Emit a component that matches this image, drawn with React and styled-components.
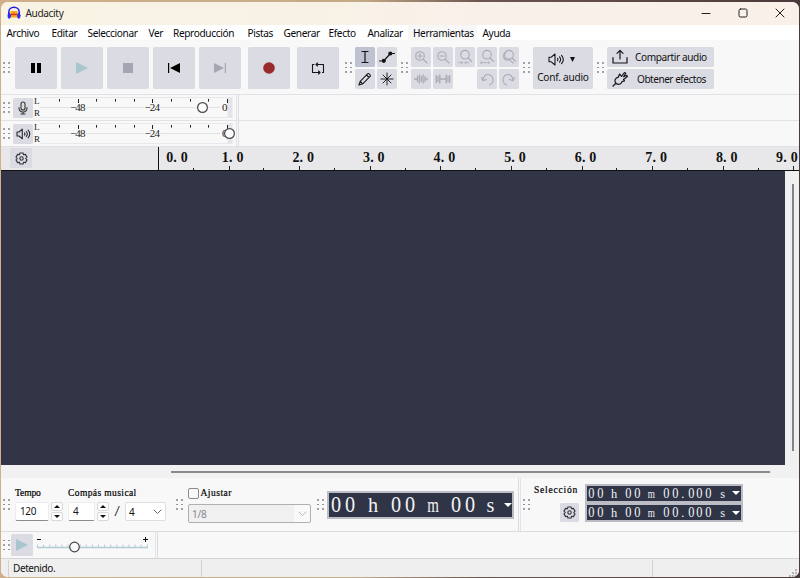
import React from 'react';
import styled, { createGlobalStyle } from 'styled-components';

const Global = createGlobalStyle`
  * { box-sizing: border-box; }
  html, body { margin: 0; padding: 0; overflow: hidden; }
  body { background: #7a6455; font-family: "Noto Sans", "Open Sans", sans-serif; }
  svg { display: block; flex: none; }
`;
const Desktop = styled.div`
  width: 800px; height: 578px; padding: 2px 1px 1px 1px;
  background: linear-gradient(90deg, #cfb08a 0, #c3aa86 45%, #6d5550 60%, #4b3a3b 100%);
`;
const Window = styled.div`
  height: 575px; border-radius: 7px; overflow: hidden; background: #f8f8f8;
  display: flex; flex-direction: column; color: #111;
`;
const TitleBar = styled.header`
  height: 23px; flex: none; display: flex; align-items: center; padding: 0 14px 2px 6px;
  background: linear-gradient(90deg, #f8f3e3, #f8f2e6 40%, #faf0ea 60%, #f9f0ea);
`;
const Title = styled.span`
  font-size: 10.1px; letter-spacing: -0.36px; margin-left: 4.5px; flex: 1; color: #222;
`;
const WindowButtons = styled.div`display: flex; align-items: center; gap: 27px;`;
const MenuBar = styled.nav`
  height: 15px; flex: none; display: flex; background: #fff;
`;
const MenuItem = styled.span`
  width: ${p => p.$w}px; flex: none; padding-left: 5.5px; font-size: 10.1px; line-height: 17px;
  letter-spacing: -0.36px; white-space: nowrap; color: #08080c;
  background: ${p => (p.$hover ? '#f7f7f7' : 'transparent')};
`;
const ToolRow = styled.div`
  height: 55px; flex: none; display: flex; align-items: flex-start; padding-top: 7px;
  border-bottom: 1px solid #e2e2e6; background: #f8f8f9;
`;
const GripBox = styled.div`
  width: 7px; height: 11px; flex: none; display: grid; grid-template-columns: 2px 2px; gap: 2.6px 3px;
  margin: ${p => p.$m};
`;
const Dot = styled.i`width: 1.7px; height: 1.7px; background: #85858f; border-radius: 1px;`;
const Button = styled.div`
  width: ${p => p.$w || 42}px; height: ${p => p.$h || 42}px; flex: none; border-radius: 1.5px;
  margin-left: ${p => p.$ml || 0}px; background: ${p => (p.$on ? '#bfc2d0' : '#dbdce3')};
  display: flex; align-items: center; justify-content: center;
`;
const Transport = styled.div`display: flex; gap: 4px;`;
const ToolGrid = styled.div`
  display: grid; grid-template-columns: repeat(${p => p.$n}, 20px); gap: 2px;
`;
const AudioSetup = styled(Button)`
  flex-direction: column; width: 60px; gap: 2px; font-size: 10.1px; letter-spacing: -0.24px; line-height: 18px; white-space: nowrap;
`;
const IconLine = styled.div`display: flex; align-items: center; gap: 5px; padding: 2px 3px 0 0;`;
const ShareStack = styled.div`display: flex; flex-direction: column; gap: 2px;`;
const ShareButton = styled(Button)`
  width: 107px; height: 20px; justify-content: flex-start; padding-left: 5px; font-size: 10.1px;
  white-space: nowrap; letter-spacing: ${p => p.$ls}px; gap: ${p => p.$gap}px;
`;
const MeterRow = styled.div`
  height: 26px; flex: none; display: flex; align-items: center; border-bottom: 1px solid #e2e2e6;
`;
const MeterBar = styled.div`
  width: 238px; height: 25px; display: flex; align-items: center;
  border-right: 1px solid #dcdce2; background: linear-gradient(#e2e2e6, #e2e2e6) 235px 0 / 1px 25px no-repeat;
`;
const Channels = styled.div`
  width: 6px; margin-left: 1px; display: flex; flex-direction: column; gap: 3px;
  font: 9px/9px "Liberation Serif", serif; color: #222;
`;
const Ruler = styled.div`
  height: 24px; flex: none; display: flex; background: #e8e8ea; border-bottom: 1px solid #111; overflow: hidden;
`;
const RulerHead = styled.div`width: 157px; flex: none; padding: 1px 0 0 9px; display: flex;`;
const RulerCell = styled.div`
  width: ${p => p.$w}px; flex: none; height: 23px; display: flex; justify-content: ${p => (p.$first ? 'flex-start' : 'center')};
  padding-left: ${p => p.$pl}px; padding-right: ${p => p.$pr || 0}px;
  border-left: ${p => (p.$first ? '1px solid #111' : '0')};
  background: linear-gradient(#222, #222) ${p => (p.$first ? '-5px' : '50%')} 100% / 1px 4px no-repeat,
    linear-gradient(#222, #222) 100% 100% / 1px 2px no-repeat;
`;
const Glyph = styled.span`
  width: ${p => p.$w}px; flex: none; text-align: ${p => p.$align || 'center'};
  display: inline-block; white-space: pre; transform: scale(${p => p.$sx || 1}, ${p => p.$sy || 1});
`;
const RulerLabel = styled.div`
  display: flex; flex: none; font: bold 14px/21px "Liberation Serif", serif; color: #111;
`;
const Tracks = styled.div`height: 294px; flex: none; display: flex; background: #f0f0f1;`;
const TrackArea = styled.div`width: 784px; background: #323546;`;
const VThumb = styled.div`width: 1.5px; height: 267px; margin: 13px 0 0 7px; background: #858589;`;
const HScroll = styled.div`
  height: 13px; flex: none; background: #f1f1f2; padding: 6px 0 0 170px;
`;
const HThumb = styled.div`width: 599px; height: 2px; background: #8a8a8d;`;
const BottomRow = styled.div`
  height: 54px; flex: none; display: flex; align-items: flex-start; background: #f8f8f9; border-bottom: 1px solid #dcdce0;
`;
const Group = styled.div`
  display: flex; flex-direction: column; flex: none; width: ${p => p.$w}px; padding-top: ${p => p.$pt || 0}px;
`;
const PixelLabel = styled.div`
  font: 9.5px/12px "Liberation Serif", serif; letter-spacing: ${p => p.$ls}px; height: 12px;
  white-space: pre; color: #000; -webkit-text-stroke: 0.2px #000; width: ${p => p.$w || 'auto'};
`;
const Line = styled.div`display: flex; align-items: center; margin-top: ${p => p.$mt || 0}px;`;
const Field = styled.div`
  width: ${p => p.$w}px; height: 19px; margin-left: ${p => p.$ml || 0}px; background: #fff;
  border: 1px solid #ececef; border-bottom-color: #8c8c90;
  font-size: 10px; letter-spacing: -0.4px; line-height: 17px; padding-left: 4px; color: #16161c; border-radius: 2px;
`;
const Spin = styled.div`width: 12px; margin-left: 2px; display: flex; flex-direction: column; gap: 1px;`;
const SpinKey = styled.div`
  height: 9px; background: #fefefe; border: 1px solid #d9d9dc; border-radius: 2px;
  display: flex; align-items: center; justify-content: center;
`;
const Slash = styled.div`
  width: 16px; text-align: center; font: 15px/19px "Liberation Serif", serif; transform: scaleX(1.25);
`;
const Select = styled.div`
  width: ${p => p.$w}px; height: ${p => p.$h}px; display: flex; align-items: center; justify-content: space-between;
  padding: 0 3px; border: 1px solid ${p => (p.$dim ? '#b0b0b4' : '#dedee2')}; border-radius: 2px;
  background: ${p => (p.$dim ? 'linear-gradient(90deg,#f0f0f1 105px,#f9f9f9 105px)' : '#fff')};
  font-size: 10px; letter-spacing: -0.2px; color: ${p => (p.$dim ? '#85858a' : '#111')};
`;
const Check = styled.div`
  width: 11px; height: 11px; border: 1px solid #8a8a8e; border-radius: 2px; background: #f8f8f8; margin-right: 1.5px;
`;
const TimeBox = styled.div`
  width: ${p => p.$w}px; height: ${p => p.$h}px; flex: none; border: 2px solid #bcbdc4; background: #303447;
  display: flex; align-items: center; color: #f2f2f4; margin-top: ${p => p.$mt || 0}px;
  font: ${p => p.$fs}px/${p => p.$h - 4}px "Liberation Serif", serif;
`;
const Divider = styled.div`
  width: 3px; height: 53px; flex: none; margin-left: ${p => p.$ml}px;
  border-left: 1px solid #dcdce0; border-right: 1px solid #e4e4e8;
`;
const SelectionGroup = styled.div`
  display: grid; grid-template-columns: 51px 158px; row-gap: 0; padding-top: 5.5px; flex: none;
`;
const SelectionCell = styled.div`
  height: 19.5px; padding-right: 6px; display: flex; justify-content: ${p => (p.$end ? 'flex-end' : 'flex-start')};
`;
const SpeedRow = styled.div`
  height: 26px; flex: none; display: flex; align-items: center; background: #f8f8f9;
`;
const SpeedEnd = styled.div`
  width: 3px; height: 26px; margin-left: 4px; border-left: 1px solid #e4e4e8; border-right: 1px solid #dcdce0;
`;
const Status = styled.footer`
  flex: 1; display: flex; align-items: stretch; background: #efefef; border-top: 1px solid #d4d4d6;
  font-size: 10px; letter-spacing: -0.4px; color: #111;
`;
const StatusText = styled.div`
  width: ${p => p.$w}px; flex: none; margin: 1px 0 1px ${p => p.$ml || 0}px; border-left: ${p => (p.$plain ? 0 : 1)}px solid #d2d2d5;
  padding-left: 4px; line-height: 17px;
`;
const ResizeCorner = styled.div`margin: auto 2px 1px auto;`;

const Grip = ({ m }) => (
  <GripBox $m={m}>{[0, 1, 2, 3, 4, 5].map(i => <Dot key={i} />)}</GripBox>
);

const Svg = ({ w, h = w, c = '#15151a', sw = 1, children }) => (
  <svg width={w} height={h} viewBox={`0 0 ${w} ${h}`} fill="none" stroke={c} strokeWidth={sw}
    strokeLinecap="round" strokeLinejoin="round">{children}</svg>
);
const DIM = '#a9abb6';

const Logo = () => (
  <Svg w={14} c="#1a1aee" sw={1.5}>
    <path d="M3.500 5h7v6.500h-7z" fill="#f9a81c" stroke="none" />
    <path d="M4 8.800l1-.8 1 .9 1-1.200 1 1.200 1-.9 1 .8" stroke="#e8321d" strokeWidth="1.200" />
    <path d="M1.800 8V6.200C1.800 3.300 4.200 1.300 7 1.300s5.200 2 5.200 4.900V8" />
    <ellipse cx="2.200" cy="9.800" rx="1.300" ry="2.700" fill="#2436f5" strokeWidth=".6" />
    <ellipse cx="11.800" cy="9.800" rx="1.300" ry="2.700" fill="#2436f5" strokeWidth=".6" />
  </Svg>
);
const Speaker = () => (
  <Svg w={17} h={13} sw={1.1}>
    <path d="M1 4.200h2.300L7 1v11L3.300 8.800H1z" />
    <path d="M9.500 5.300c.5.800.5 1.600 0 2.400M11.500 3.800c1.400 1.700 1.400 3.700 0 5.400M13.500 2.300c2.300 2.600 2.300 5.800 0 8.400" />
  </Svg>
);
const SmallSpeaker = () => (
  <Svg w={15} h={12} c="#2a2a30" sw={1.1}>
    <path d="M1 4h2l3.300-2.800v9.600L3 8H1z" />
    <path d="M8.500 4.900c.5.700.5 1.500 0 2.200M10.300 3.500c1.200 1.500 1.200 3.500 0 5M12.100 2.200c2 2.300 2 5.300 0 7.600" />
  </Svg>
);
const Gear = () => (
  <Svg w={13} sw={1.1} c="#33333a">
    <path d="M4.900 1h3.200l.5 1.800 1.800-.4 1.600 2.700-1.300 1.400L12 7.900l-1.600 2.700-1.800-.4L8.100 12H4.900l-.5-1.800-1.800.4L1 7.900l1.300-1.400L1 5.100l1.600-2.700 1.800.4z" />
    <circle cx="6.500" cy="6.500" r="1.700" />
  </Svg>
);
const Magnifier = ({ children, s = 0 }) => (
  <Svg w={16} c={DIM} sw={1.1}>
    <circle cx={7 + s} cy={s ? 5.7 : 7} r="4.300" /><path d={s ? 'M11.200 9l3.300 3.500' : 'M10.200 10.200l3.800 3.800'} />{children}
  </Svg>
);
const zoomIcons = [
  <Magnifier><path d="M4.800 7h4.400M7 4.800v4.400" /></Magnifier>,
  <Magnifier><path d="M4.800 7h4.400" /></Magnifier>,
  <Magnifier s={1}><path d="M1.500 13.700h4M8 13.700h4M4.500 12.500l1.200 1.200-1.200 1.200M9.200 12.500L8 13.700l1.200 1.200" strokeWidth=".8" /></Magnifier>,
  <Magnifier s={1}><path d="M1.500 13.700h9M2.700 12.500l-1.200 1.200 1.200 1.200M9.300 12.500l1.200 1.200-1.200 1.200" strokeWidth=".8" /></Magnifier>,
  <Magnifier s={1}><path d="M4.600 3.200C1.500 5 2 10 5.500 11c1.500.4 2.800 0 3.500-.8M8.500 10.700l3.700 3.500" /></Magnifier>,
  <Svg w={16} c={DIM} sw={1.3}><path d="M1.500 8h3M12 8h2.500M4.500 5.500v5M6.400 4v8M8.300 5.500v5M10.100 4v8M12 5.500v5" /></Svg>,
  <Svg w={16} c={DIM} sw={1.3}><path d="M1.300 4.500v7M3 5.500v5M4.800 4v8M5 8h6M11.200 4v8M13 5.500v5M14.700 4.500v7" /></Svg>,
  null,
  <Svg w={16} c={DIM} sw={1.1}><path d="M2.500 6.500l1.500 3.300 3.500-1.300M4 9.500C4 4.500 8 2.500 11 4s4 5.500 2 8c-.7.900-1.500 1.500-2.500 2" /></Svg>,
  <Svg w={16} c={DIM} sw={1.1}><path d="M13.500 6.500L12 9.800 8.500 8.500M12 9.500C12 4.500 8 2.500 5 4s-4 5.500-2 8c.7.900 1.500 1.500 2.500 2" /></Svg>,
];
const Triangle = ({ c = '#fff', w = 8, h = 4 }) => (
  <svg width={w} height={h} viewBox="0 0 8 4" preserveAspectRatio="none"><path d="M0 0h8L4 4z" fill={c} /></svg>
);
const Chevron = ({ c }) => <Svg w={9} h={6} c={c}><path d="M1 1l3.500 3.500L8 1" /></Svg>;
const SpinButtons = () => (
  <Spin>
    <SpinKey><svg width="6" height="3" viewBox="0 0 6 3"><path d="M0 3h6L3 0z" fill="#111" /></svg></SpinKey>
    <SpinKey><svg width="6" height="3" viewBox="0 0 6 3"><path d="M0 0h6L3 3z" fill="#111" /></svg></SpinKey>
  </Spin>
);

const menus = [['Archivo', 45], ['Editar', 36], ['Seleccionar', 61], ['Ver', 24.5], ['Reproducción', 74.5],
  ['Pistas', 36], ['Generar', 45], ['Efecto', 39], ['Analizar', 45.5], ['Herramientas', 69.5], ['Ayuda', 40]];

const meterTicks = [59.5, 78.5, 96.5, 115.5, 134.5, 152.5, 171.5, 190.5, 208.5, 227.5];
const Meter = ({ thumb }) => (
  <svg width="195" height="25" viewBox="40 0 195 25" fontFamily="Liberation Serif, serif" fontSize="11" fill="#222">
    <path d="M40 2.500h193M40 22.500h193" stroke="#e9e9ed" />
    <path d="M40 12.500h30M86 12.500h58M160 12.500h60" stroke="#e2e2e6" />
    <path d="M230 3v19" stroke="#e4e4ea" strokeWidth="5" />
    {meterTicks.map(x => (
      <path key={x} d={`M${x} 4v${[78.5, 152.5, 227.5].includes(x) ? 4 : 2.6}`} stroke="#222" />
    ))}
    <text x="70" y="15.500" textLength="15.500">−48</text>
    <text x="144.500" y="15.500" textLength="15.500">−24</text>
    <text x="222" y="15.500">0</text>
    <circle cx={thumb} cy="12.500" r="4.900" fill="#fcfcfc" stroke="#4a4a50" strokeWidth="1.200" />
  </svg>
);

const rulerLabel = n => (
  <RulerLabel><Glyph $w={7.3}>{n}</Glyph><Glyph $w={7.3} $align="left">.</Glyph><Glyph $w={7.3}>0</Glyph></RulerLabel>
);

const bigTime = [['0', 14], ['0', 14], ['h', 32], ['0', 14], ['0', 14], ['m', 32], ['0', 14], ['0', 14], ['s', 27]];
const smallTime = [['0', 8.6], ['0', 8.6], ['h', 20], ['0', 8.6], ['0', 8.6], ['m', 20.6], ['0', 8.6], ['0', 8.6],
  ['.', 7.6], ['0', 8.6], ['0', 8.6], ['0', 8.6], ['s', 19.5]];
const Time = ({ cells, w, h, fs, mt }) => (
  <TimeBox $w={w} $h={h} $fs={fs} $mt={mt}>
    {cells.map(([t, cw], i) => (
      <Glyph key={i} $w={cw} $sx={t === 'm' ? 0.68 : 0.92} $sy={t === '0' ? 1.05 : 1}>{t}</Glyph>
    ))}
    <Triangle />
  </TimeBox>
);

const speedTicks = Array.from({ length: 19 }, (_, i) => 4.5 + i * 6.1);
const SpeedSlider = () => (
  <svg width="118" height="24" viewBox="0 0 118 24">
    <path d="M4 14.500h111" stroke="#b3cbd4" strokeWidth="1.500" />
    {speedTicks.map(x => <path key={x} d={`M${x} 14v-2.500`} stroke="#b3cbd4" />)}
    <path d="M4 6.500h4M110 6.500h5M112.500 4v5" stroke="#111" />
    <circle cx="41.500" cy="14" r="4.800" fill="#fafafa" stroke="#444449" strokeWidth="1.200" />
  </svg>
);

export default function App() {
  return (
    <Desktop>
      <Global />
      <Window>
        <TitleBar>
          <Logo />
          <Title>Audacity</Title>
          <WindowButtons>
            <Svg w={10} c="#222"><path d="M1 5.500h8" /></Svg>
            <Svg w={10} c="#222"><rect x="1" y="1" width="8" height="8" rx="1.500" /></Svg>
            <Svg w={10} c="#222"><path d="M1 1l8 8M9 1L1 9" /></Svg>
          </WindowButtons>
        </TitleBar>
        <MenuBar>
          {menus.map(([t, w]) => <MenuItem key={t} $w={w} $hover={t === 'Herramientas'}>{t}</MenuItem>)}
        </MenuBar>

        <ToolRow>
          <Grip m="15px 5px 0 2px" />
          <Transport>
            <Button><Svg w={12} c="none"><path d="M1 1h4v10H1zM7 1h4v10H7z" fill="#000" /></Svg></Button>
            <Button><Svg w={12} c="none"><path d="M0 0l12 6-12 6z" fill="#a9c6ce" /></Svg></Button>
            <Button><Svg w={10} c="none"><path d="M0 0h10v10H0z" fill="#a4a7b2" /></Svg></Button>
            <Button><Svg w={12} c="none"><path d="M0 1h1.200v10H0zM12 1v10L2 6z" fill="#000" /></Svg></Button>
            <Button><Svg w={12} c="none"><path d="M12 1h-1.200v10H12zM0 1v10l10-5z" fill="#a4a7b2" /></Svg></Button>
          </Transport>
          <Button $ml={7}><Svg w={12} c="none"><circle cx="6" cy="6" r="5.800" fill="#992b2d" /></Svg></Button>
          <Button $ml={7}>
            <Svg w={14} sw={1.1}><path d="M3 3.500H1.500v8h7.500M7.500 10l1.500 1.500L7.500 13M11.500 11.500h1v-8H5M6.500 2L5 3.500 6.500 5" /></Svg>
          </Button>
          <Grip m="15px 3px 0 6px" />
          <ToolGrid $n={2}>
            <Button $w={20} $h={20} $on><Svg w={14}><path d="M4 1.500h6M4 12.500h6M7 1.500v11" strokeWidth="1.200" /></Svg></Button>
            <Button $w={20} $h={20}><Svg w={16} sw={1.2}><path d="M.5 12h4l7-7.500h4" /><circle cx="4.800" cy="11.800" r="1.500" fill="#111" /><circle cx="11.300" cy="4.500" r="1.500" fill="#111" /></Svg></Button>
            <Button $w={20} $h={20}><Svg w={14} sw={1.1}><path d="M1 13l1.200-3.700 7.600-7.600c.8-.8 3.200 1.500 2.500 2.500L4.700 11.800zM2.200 9.300l2.500 2.500M8.500 3l2.500 2.500" /></Svg></Button>
            <Button $w={20} $h={20}><Svg w={14}><path d="M7 1v12M1 7h12M3 3l8 8M11 3l-8 8" strokeWidth=".95" /></Svg></Button>
          </ToolGrid>
          <Grip m="15px 3px 0 4px" />
          <ToolGrid $n={5}>
            {zoomIcons.map((icon, i) => (icon ? <Button key={i} $w={20} $h={20}>{icon}</Button> : <span key={i} />))}
          </ToolGrid>
          <Grip m="15px 3px 0 4px" />
          <AudioSetup>
            <IconLine><Speaker /><Triangle c="#111" w={5} h={5} /></IconLine>
            Conf. audio
          </AudioSetup>
          <Grip m="15px 3px 0 4px" />
          <ShareStack>
            <ShareButton $gap={7} $ls={-0.4}>
              <Svg w={16} sw={1.2}><path d="M1 8.500V14h14V8.500M8 10V1.500M5 4.300l3-3 3 3" /></Svg>
              Compartir audio
            </ShareButton>
            <ShareButton $gap={9} $ls={-0.5}>
              <Svg w={16} sw={1.2}><path d="M1 15l3-2.700M4 12.300C1.700 9.500 3.500 7 6.300 6.200L7.500 3l2 2.300 3-3.800 1.300.8-2.200 3.500 3.200-1.500.6 1.300-3.900 2.800 1 1.500-2.500.7C9 13.500 6.200 14.300 4 12.300z" /></Svg>
              Obtener efectos
            </ShareButton>
          </ShareStack>
        </ToolRow>

        <MeterRow>
          <MeterBar>
            <Grip m="0 3px 0 2px" />
            <Button $w={20} $h={20}>
              <Svg w={12} h={14} c="#333" sw={1.1}><rect x="4" y="1" width="4" height="8" rx="2" /><path d="M2 6.500c0 6 8 6 8 0M6 11v2M4 13h4" /></Svg>
            </Button>
            <Channels><span>L</span><span>R</span></Channels>
            <Meter thumb={202.5} />
          </MeterBar>
        </MeterRow>
        <MeterRow>
          <MeterBar>
            <Grip m="0 3px 0 2px" />
            <Button $w={20} $h={20}><SmallSpeaker /></Button>
            <Channels><span>L</span><span>R</span></Channels>
            <Meter thumb={229.5} />
          </MeterBar>
        </MeterRow>

        <Ruler>
          <RulerHead><Button $w={22} $h={20}><Gear /></Button></RulerHead>
          <RulerCell $w={35.8} $first $pl={7}>{rulerLabel(0)}</RulerCell>
          {[1, 2, 3, 4, 5, 6, 7, 8].map(n => <RulerCell key={n} $w={70.6} $pl={7}>{rulerLabel(n)}</RulerCell>)}
          <RulerCell $w={70.6} $pl={0} $pr={14}>{rulerLabel(9)}</RulerCell>
        </Ruler>

        <Tracks><TrackArea /><VThumb /></Tracks>
        <HScroll><HThumb /></HScroll>

        <BottomRow>
          <Grip m="21px 5px 0 2px" />
          <Group $pt={9} $w={159}>
            <Line>
              <PixelLabel $ls={-0.1} $w="53px">Tempo</PixelLabel>
              <PixelLabel $ls={0.4}>Compás musical</PixelLabel>
            </Line>
            <Line $mt={3}>
              <Field $w={34}>120</Field><SpinButtons />
              <Field $w={27} $ml={5}>4</Field><SpinButtons />
              <Slash>/</Slash>
              <Select $w={41} $h={19}>4<Chevron c="#666" /></Select>
            </Line>
          </Group>
          <Grip m="21px 5px 0 2px" />
          <Group $pt={9} $w={127}>
            <Line><Check /><PixelLabel $ls={0.5}>Ajustar</PixelLabel></Line>
            <Line $mt={5}><Select $w={123} $h={19} $dim>1/8<Chevron c="#b8b8bc" /></Select></Line>
          </Group>
          <Grip m="21px 3px 0 2px" />
          <Time cells={bigTime} w={187} h={28} fs={22} mt={13} />
          <Divider $ml={4} />
          <Grip m="21px 4px 0 2px" />
          <SelectionGroup>
            <SelectionCell><PixelLabel $ls={0.8}>Selección</PixelLabel></SelectionCell>
            <Time cells={smallTime} w={158} h={19} fs={13.5} />
            <SelectionCell $end><Button $w={19} $h={19}><Gear /></Button></SelectionCell>
            <Time cells={smallTime} w={158} h={19} fs={13.5} />
          </SelectionGroup>
        </BottomRow>

        <SpeedRow>
          <Grip m="0 1px 0 2px" />
          <Button $w={22} $h={22}><Svg w={12} c="none"><path d="M0 0l12 6-12 6z" fill="#a9c6ce" /></Svg></Button>
          <SpeedSlider />
          <SpeedEnd />
        </SpeedRow>
        <Status>
          <StatusText $w={193} $ml={7}>Detenido.</StatusText>
          <StatusText $w={451} />
          <StatusText $w={100} />
          <ResizeCorner>
            <Svg w={8} c="none"><path d="M6 0h2v2H6zM3 3h2v2H3zM6 3h2v2H6zM0 6h2v2H0zM3 6h2v2H3zM6 6h2v2H6z" fill="#b5b5b5" /></Svg>
          </ResizeCorner>
        </Status>
      </Window>
    </Desktop>
  );
}
